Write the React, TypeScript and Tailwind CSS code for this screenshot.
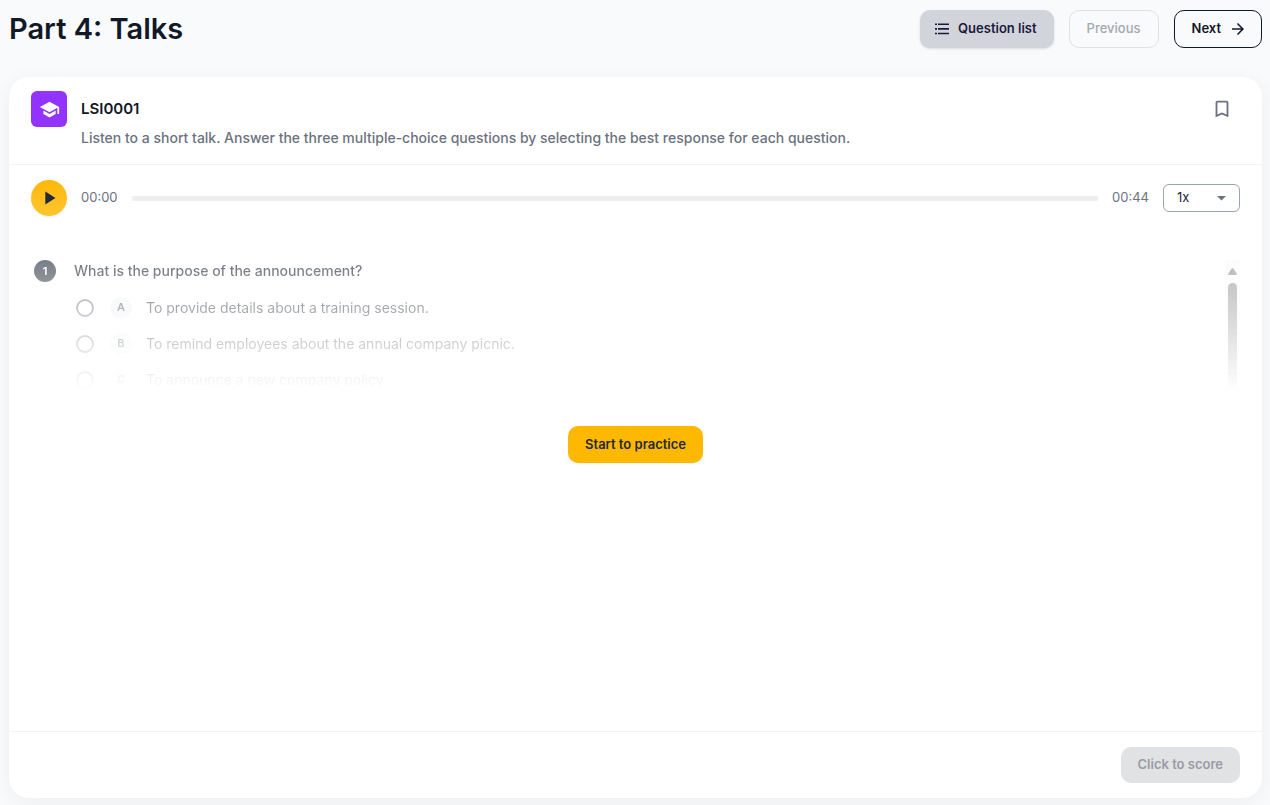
import React from 'react';
import { MdArrowForward, MdBookmarkBorder, MdPlayArrow, MdSchool } from 'react-icons/md';

interface Choice {
    key: string;
    text: string;
}

interface Question {
    no: number;
    title: string;
    choices: Choice[];
}

const question: Question = {
    no: 1,
    title: 'What is the purpose of the announcement?',
    choices: [
        { key: 'A', text: 'To provide details about a training session.' },
        { key: 'B', text: 'To remind employees about the annual company picnic.' },
        { key: 'C', text: 'To announce a new company policy.' },
    ],
};

const ListIcon: React.FC = () => (
    <svg width="16" height="16" viewBox="0 0 16 16" fill="currentColor" aria-hidden="true">
        <path d="M1 2.500h2v1.600H1zM4 2.500h11v1.600H4zM1 7.100h2v1.600H1zM4 7.100h11v1.600H4zM1 11.700h2v1.600H1zM4 11.700h11v1.600H4z" />
    </svg>
);

const PageHeader: React.FC = () => (
    <header className="flex items-center justify-between">
        <h1 className="text-[29px] leading-9 font-semibold text-[#111827]">Part 4: Talks</h1>
        <div className="flex gap-[15px] text-[13px] font-semibold">
            <button className="flex h-[38px] items-center gap-2 rounded-[10px] bg-[#d1d5db] pr-[17px] pl-[14px] text-[#1c1a3c] shadow-sm">
                <ListIcon />
                Question list
            </button>
            <button disabled className="h-[38px] rounded-[10px] border border-[#dfe1e4] px-[17px] font-medium text-[#a5a9ae]">
                Previous
            </button>
            <button className="flex h-[38px] items-center gap-2 rounded-[10px] border border-[#111827] pr-[14px] pl-[17px] text-[#111827]">
                Next
                <MdArrowForward size={18} />
            </button>
        </div>
    </header>
);

const Player: React.FC = () => (
    <div className="flex items-center px-[22px] pt-[15px] text-[13px] text-[#6b7280]">
        <button
            aria-label="Play"
            className="flex size-9 items-center justify-center rounded-full bg-linear-to-b from-[#ffb800] to-[#ffc52e] text-[#1f2937] shadow-xs"
        >
            <MdPlayArrow size={22} />
        </button>
        <span className="ml-[14px]">00:00</span>
        <div
            role="progressbar"
            aria-label="Audio progress"
            aria-valuenow={0}
            className="mx-[14px] h-[5px] flex-1 rounded-xs bg-[#eeeeee]"
        />
        <span>00:44</span>
        <div className="relative ml-[14px]">
            <select
                aria-label="Playback speed"
                className="block h-7 w-[77px] appearance-none rounded-md border border-[#9ca3af] bg-white pl-[13px] text-[13px] text-[#1f2937]"
            >
                <option>1x</option>
                <option>1.25x</option>
                <option>1.5x</option>
            </select>
            <svg className="pointer-events-none absolute top-3 right-[14px]" width="9" height="5" viewBox="0 0 9 5" aria-hidden="true">
                <path d="M0 0h9L4.500 4.500z" fill="#6b7280" />
            </svg>
        </div>
    </div>
);

const QuestionPreview: React.FC<{ question: Question }> = ({ question }) => (
    <div className="mx-[22px] mt-11 flex h-[130px] justify-between overflow-hidden opacity-60 [mask-image:linear-gradient(to_bottom,black,transparent)]">
        <fieldset className="flex-1 text-sm">
            <legend className="flex items-center pl-[3px] leading-[22px] font-medium text-[#111827]">
                <span className="flex size-[22px] items-center justify-center rounded-full bg-[#1f2937] text-[11px] font-semibold text-white">
                    {question.no}
                </span>
                <span className="ml-[18px]">{question.title}</span>
            </legend>
            <div className="mt-2 pl-[45px]">
                {question.choices.map((choice) => (
                    <label key={choice.key} className="flex h-9 items-center text-[#111827]">
                        <input
                            type="radio"
                            name="answer"
                            disabled
                            className="size-[18px] appearance-none rounded-full border-2 border-[#6b7280]"
                        />
                        <span className="ml-4 flex size-[22px] items-center justify-center rounded-full bg-[#f0f2f2] text-[11px] font-semibold text-[#374151]">
                            {choice.key}
                        </span>
                        <span className="ml-[14px]">{choice.text}</span>
                    </label>
                ))}
            </div>
        </fieldset>
        <div className="flex w-[15px] flex-col items-center bg-[#fafafa] pt-2" aria-hidden="true">
            <svg width="9" height="7" viewBox="0 0 9 7" fill="#8b8b8b">
                <path d="M4.500 0Q5 0 5.300 0.500L9 6Q9 7 8 7H1Q0 7 0 6L3.700 0.500Q4 0 4.500 0z" />
            </svg>
            <div className="mt-2 w-[9px] flex-1 rounded-t-full bg-[#8b8b8b]" />
        </div>
    </div>
);

const App: React.FC = () => {
    return (
        <div className="flex min-h-screen flex-col bg-[#f8fafc] pt-[10px] pr-2 pb-[7px] pl-[9px] font-[Inter,'Liberation_Sans',sans-serif]">
            <PageHeader />
            <main className="mt-[29px] flex flex-1 flex-col rounded-[20px] bg-white shadow-[0_4px_20px_rgba(0,0,0,0.05)]">
                <div className="flex border-b border-[#f1f3f5] px-[22px] pt-[14px] pb-[15px]">
                    <div className="flex size-9 items-center justify-center rounded-md bg-[#9333ff] text-white">
                        <MdSchool size={21} />
                    </div>
                    <div className="ml-[14px] flex-1">
                        <h2 className="text-[15px] leading-9 font-semibold text-[#111827]">LSI0001</h2>
                        <p className="text-sm leading-[22px] font-medium text-[#6b7280]">
                            Listen to a short talk. Answer the three multiple-choice questions by selecting the best response for each question.
                        </p>
                    </div>
                    <button aria-label="Bookmark" className="flex size-9 items-center justify-center text-[#6b7280]">
                        <MdBookmarkBorder size={22} />
                    </button>
                </div>
                <Player />
                <QuestionPreview question={question} />
                <div className="mt-9 flex flex-1 items-start justify-center">
                    <button className="h-[37px] rounded-[10px] bg-[#ffb800] px-[17px] text-[13px] font-semibold text-[#1f2937] shadow-xs">
                        Start to practice
                    </button>
                </div>
                <footer className="flex justify-end border-t border-[#f1f3f5] px-[22px] py-[15px]">
                    <button disabled className="h-9 rounded-[10px] bg-[#e1e2e4] px-[17px] text-[13px] font-semibold text-[#989ca4]">
                        Click to score
                    </button>
                </footer>
            </main>
        </div>
    );
};

export default App;
